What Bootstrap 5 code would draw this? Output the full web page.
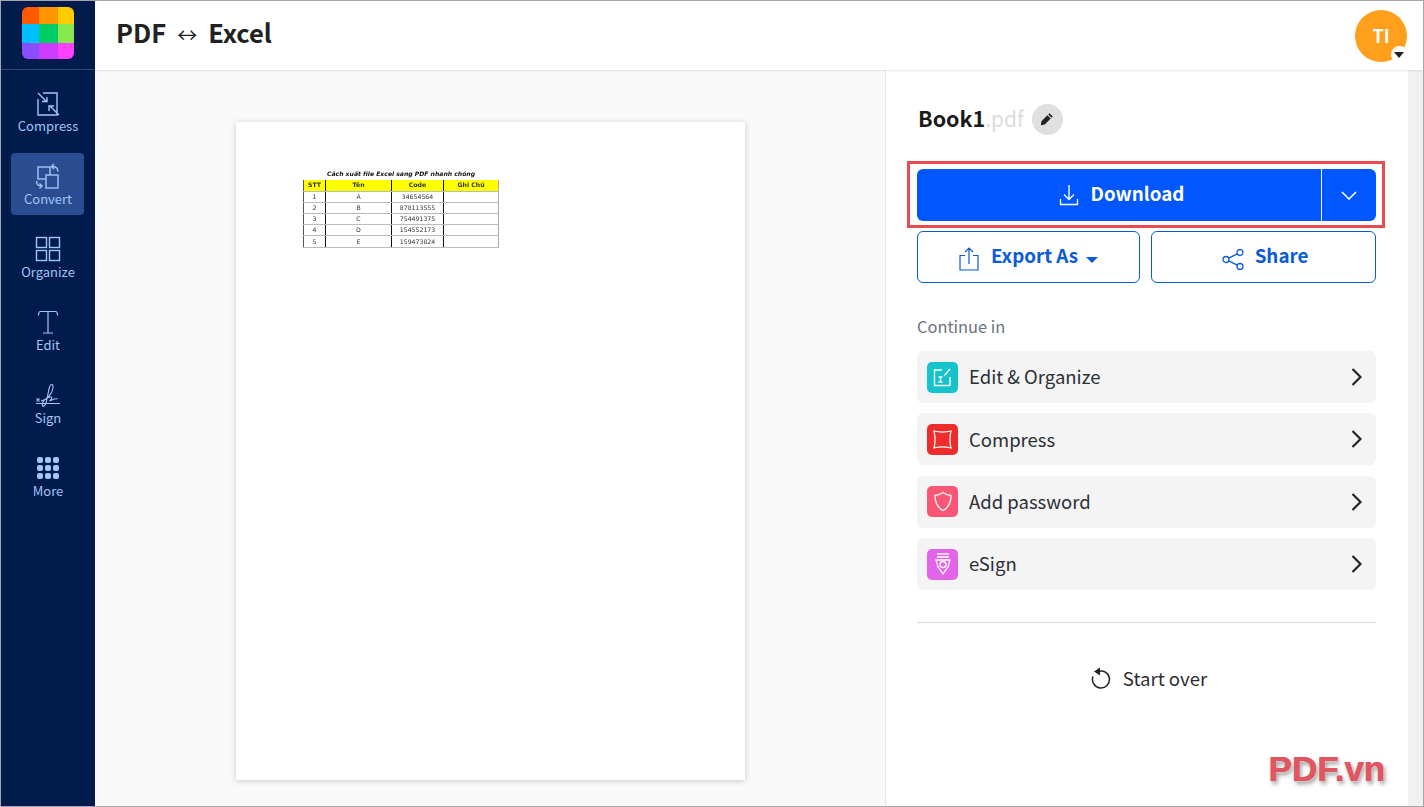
<!doctype html>
<html lang="en"><head><meta charset="utf-8"><title>PDF Excel</title>
<link href="https://cdn.jsdelivr.net/npm/bootstrap@5.3.0/dist/css/bootstrap.min.css" rel="stylesheet">
<style>
html,body{height:100%;overflow:hidden}
body{font-family:"Noto Sans CJK SC","Noto Sans",sans-serif;color:#212529;background:#fff}
.frame{width:1424px;height:807px;border:1px solid #a6a6a6;position:relative;overflow:hidden}
.side{width:94px;background:#011b4d;flex:none}
.logo-cell{height:69px;border-bottom:1px solid #33497a;padding-top:6px}
.logo-grid{width:52px;height:52px;border-radius:6px;overflow:hidden;display:grid;grid-template-columns:17px 19px 16px;grid-template-rows:17px 19px 16px}
.tools{padding:10px 0 0 10px;gap:11px}
.tool{width:73px;height:62px;color:#a3c5f7;font-size:13px;line-height:16px;border-radius:4px;padding:10px 0 0 1px;text-align:center}
.tool svg{display:block;margin:0 auto 2px;width:26px;height:26px;fill:none;stroke:#a3c5f7;stroke-width:1.4}
.tool.on{background:#2a4d92}
.head{height:69px;padding-left:21px;box-shadow:0 1px 2px rgba(0,0,0,.1);position:relative;z-index:2;background:#fff}
.head-title{font-size:25.5px;font-weight:700;line-height:1;color:#212121;padding-bottom:8px}
.head-arrow{font-size:20px;font-weight:400;margin:0 11px}
.avatar{width:52px;height:52px;border-radius:50%;background:#ff9f1c;color:#fff;font-weight:700;font-size:18px;position:relative;margin-right:16px}
.avatar-cue{position:absolute;right:-1px;bottom:-1px;width:17px;height:17px;border-radius:50%;background:#fff}
.avatar-cue:after{content:"";position:absolute;left:3px;top:6px;border:5px solid transparent;border-top:6px solid #212121;border-bottom:0}
.stage{background:#f9f9f9;min-width:0}
.sheet{width:509px;height:658px;margin:52px 0 0 141px;background:#fff;box-shadow:0 1px 6px rgba(0,0,0,.2);padding:46px 0 0 67px}
.mini{width:195px;border-collapse:collapse;table-layout:fixed;font-family:"DejaVu Sans",sans-serif;font-size:6.2px;line-height:10px;color:#333;text-align:center;filter:blur(.4px)}
.mini td,.mini th{border-bottom:1px solid #bbb;border-right:1px solid #111;height:11.2px;padding:0;font-weight:400}
.mini td:last-child,.mini th:last-child{border-right:1px solid #aaa}
.mini td:first-child,.mini th:first-child{border-left:1px solid #555}
.mini caption{caption-side:top;padding:0;color:#111;text-align:center;font-style:italic;font-weight:700;font-size:6.1px;line-height:12px;border-bottom:0}
.mini thead th{background:#ff0;font-weight:700;color:#333}
.panel{width:523px;flex:none;border-left:1px solid #e6e6e6;background:#fff;padding:33px 32px 0 31px;position:relative}
.rail{width:15px;flex:none;background:#f1f1f1}
.fname{height:32px;font-size:21.5px;font-weight:700;line-height:30px;color:#1a1a1a;padding-left:1px}
.fname span{color:#dcdcdc;font-weight:400;font-size:21px}
.pen{width:31px;height:31px;border-radius:50%;background:#e0e0e0;margin-left:8px}
.dl-wrap{position:relative;margin-top:34px}
.red-box{position:absolute;left:-10px;right:-9px;top:-8px;bottom:-7px;border:3px solid #e84c4f;pointer-events:none}
.dl-main,.dl-more{height:52px;background:#0057ff;border:0;color:#fff;font-size:18.8px;font-weight:700;border-radius:6px}
.dl-main{flex:1;border-radius:6px 0 0 6px;border-right:1px solid #fff;padding:0 0 4px 5px}
.dl-more{width:54px;border-radius:0 6px 6px 0}
.dl-main:hover,.dl-more:hover{background:#0057ff;color:#fff}
.dl-main svg{margin-top:3px}
.out-btn{height:52px;border:1px solid #0a5bd8;color:#0a5bd8;background:#fff;font-size:18.8px;font-weight:700;border-radius:6px;line-height:1;padding-bottom:9px}
.out-btn svg{margin-top:7px}
.out-caret{border:6px solid transparent;border-top:6px solid #0a5bd8;border-bottom:0;margin-top:8px}
.export{width:223px}.share{width:225px;padding-left:15px}
.share svg{margin-right:11px!important}
.cont-label{font-size:16.4px;line-height:24px;color:#6b7280;margin-top:31px}
.cont-row{height:52px;background:#f4f4f4;border-radius:6px;padding:0 14px 0 10px;font-size:18.5px;color:#2b2f36;margin-top:10.4px}
.cont-first{margin-top:13px}
.cont-ico{width:31px;height:31px;border-radius:5px;margin-right:11px;flex:none}
.sep{border-top:1px solid #d9d9d9;margin-top:31.5px}
.again{font-size:18.6px;color:#2b2f36;margin-top:41px;line-height:28px;padding-left:5px}
.again svg{margin-right:12px}
.stamp{position:absolute;right:38px;bottom:19px;font-family:"Liberation Sans",sans-serif;font-weight:700;font-size:35px;line-height:36px;color:#e05661;text-shadow:.5px 0 0 #e05661,1px 1px 0 #c9c9c9,2px 3px 4px rgba(0,0,0,.4)}
</style></head>
<body>
<div class="frame d-flex">
 <nav class="side">
  <div class="logo-cell"><div class="logo-grid mx-auto">
   <i style="background:#ff5a00"></i><i style="background:#ff9500"></i><i style="background:#ffcc00"></i>
   <i style="background:#00bfff"></i><i style="background:#00cc66"></i><i style="background:#88e84f"></i>
   <i style="background:#8a4dff"></i><i style="background:#cc3dff"></i><i style="background:#ff40ff"></i>
  </div></div>
  <div class="tools d-flex flex-column">
   <div class="tool"><svg viewBox="0 0 26 26"><path d="M8 3h14v22H3V9M3 3l9 9M7 11.500h5V7M24 25l-9-9M14 21v-5h5"/></svg>Compress</div>
   <div class="tool on"><svg viewBox="0 0 26 26"><rect x="3" y="4" width="12" height="12"/><rect x="11" y="12" width="12" height="13" fill="#2a4d92"/><path d="M19 1l-2.500 2.500 2.500 2.500M17 3.500c4 0 6 1 6 5M1.500 18c0 3 1 5 5 5M4.500 20.500l2.500 2.500-2.500 2.500"/></svg>Convert</div>
   <div class="tool"><svg viewBox="0 0 26 26"><rect x="1.500" y="1.500" width="10" height="10"/><rect x="14.500" y="1.500" width="10" height="10"/><rect x="1.500" y="14.500" width="10" height="10"/><rect x="14.500" y="14.500" width="10" height="10"/></svg>Organize</div>
   <div class="tool"><svg viewBox="0 0 26 26" style="stroke-width:1.200"><path d="M3.500 6.500c0-3 .5-4 2-4h15c1.500 0 2 1 2 4M13 2.500v21.500M8 24h10"/></svg>Edit</div>
   <div class="tool"><svg viewBox="0 0 26 26" style="stroke-width:1.100"><path d="M1 21.500h24M1.500 16.500l3 3M4.500 16.500l-3 3M6 19c6-1 11-7 12-13 .5-4-2-5-3.500-1-1.500 5-2 12-4 17-1.500 3.500-3.500 3-3-.5.500-3 4-5.500 7.500-6.500 3-.5 2 2-.5 4 3-1 6-3 8-2"/></svg>Sign</div>
   <div class="tool"><svg viewBox="0 0 26 26" style="stroke:none;fill:#a3c5f7"><rect x="2" y="2" width="6" height="6" rx="2"/><rect x="10" y="2" width="6" height="6" rx="2"/><rect x="18" y="2" width="6" height="6" rx="2"/><rect x="2" y="10" width="6" height="6" rx="2"/><rect x="10" y="10" width="6" height="6" rx="2"/><rect x="18" y="10" width="6" height="6" rx="2"/><rect x="2" y="18" width="6" height="6" rx="2"/><rect x="10" y="18" width="6" height="6" rx="2"/><rect x="18" y="18" width="6" height="6" rx="2"/></svg>More</div>
  </div>
 </nav>
 <div class="flex-grow-1 d-flex flex-column" style="min-width:0">
  <header class="head d-flex align-items-center justify-content-between">
   <div class="head-title">PDF<span class="head-arrow">↔</span>Excel</div>
   <div class="avatar d-flex align-items-center justify-content-center">TI<span class="avatar-cue"></span></div>
  </header>
  <div class="d-flex flex-grow-1" style="min-height:0">
   <main class="stage flex-grow-1">
    <div class="sheet">
     <table class="mini">
      <caption>Cách xuất file Excel sang PDF nhanh chóng</caption>
      <colgroup><col style="width:22px"><col style="width:66px"><col style="width:52px"><col style="width:55px"></colgroup>
      <thead><tr><th>STT</th><th>Tên</th><th>Code</th><th>Ghi Chú</th></tr></thead>
      <tbody>
       <tr><td>1</td><td>A</td><td>34654564</td><td></td></tr>
       <tr><td>2</td><td>B</td><td>878113555</td><td></td></tr>
       <tr><td>3</td><td>C</td><td>754491375</td><td></td></tr>
       <tr><td>4</td><td>D</td><td>154552173</td><td></td></tr>
       <tr><td>5</td><td>E</td><td>159473824</td><td></td></tr>
      </tbody>
     </table>
    </div>
   </main>
   <aside class="panel">
    <div class="d-flex align-items-center">
     <div class="fname">Book1<span>.pdf</span></div>
     <div class="pen d-flex align-items-center justify-content-center"><svg width="14" height="14" viewBox="0 0 14 14"><path fill="#222" d="M9.500 1.200l3.300 3.300-1.300 1.300-3.300-3.300zM7.400 3.300l3.300 3.300-5.900 5.900-4 .7.700-4z"/></svg></div>
    </div>
    <div class="dl-wrap">
     <div class="d-flex">
      <button class="btn dl-main d-flex align-items-center justify-content-center"><svg class="me-2" width="20" height="22" viewBox="0 0 20 22" fill="none" stroke="#fff" stroke-width="1.300"><path d="M10 1v14M5 10.500l5 5 5-5M1.500 15v5.500h17V15"/></svg><span class="ms-1">Download</span></button>
      <button class="btn dl-more d-flex align-items-center justify-content-center" aria-label="More"><svg width="16" height="9" viewBox="0 0 16 9" fill="none" stroke="#fff" stroke-width="1.500"><path d="M1 1l7 7 7-7"/></svg></button>
     </div>
     <span class="red-box"></span>
    </div>
    <div class="d-flex justify-content-between" style="margin-top:10px">
     <button class="btn out-btn export d-flex align-items-center justify-content-center"><svg class="me-2" width="20" height="24" viewBox="0 0 20 24" fill="none" stroke="#0a5bd8" stroke-width="1.200"><path d="M6 8.500H1v14.500h18V8.500h-5M10 17V1M6 5l4-4 4 4"/></svg><span class="ms-1">Export As</span><span class="ms-2 out-caret"></span></button>
     <button class="btn out-btn share d-flex align-items-center justify-content-center"><svg class="me-2" width="22" height="21" viewBox="0 0 22 21" fill="none" stroke="#0a5bd8" stroke-width="1.300"><circle cx="4" cy="10.500" r="3"/><circle cx="18" cy="3.500" r="3"/><circle cx="18" cy="17.500" r="3"/><path d="M6.700 9.200l8.600-4.400M6.700 11.800l8.600 4.400"/></svg>Share</button>
    </div>
    <div class="cont-label">Continue in</div>
    <div class="cont-row cont-first d-flex align-items-center justify-content-between"><div class="d-flex align-items-center"><span class="cont-ico d-flex align-items-center justify-content-center" style="background:#14c3cb"><svg width="21" height="21" viewBox="0 0 21 21" fill="none" stroke="#fff" stroke-width="1.400"><path d="M10 3H2.500v15.500H18V10M12 9l6-7M6.500 10h4M8.500 10v5M6.500 15h4"/></svg></span>Edit &amp; Organize</div><svg width="11" height="18" viewBox="0 0 11 18" fill="none" stroke="#222" stroke-width="2.200"><path d="M1.500 1l8 8-8 8"/></svg></div>
    <div class="cont-row d-flex align-items-center justify-content-between"><div class="d-flex align-items-center"><span class="cont-ico d-flex align-items-center justify-content-center" style="background:#ee2c2c"><svg width="21" height="21" viewBox="0 0 21 21" fill="none" stroke="#fff" stroke-width="1.200"><path d="M2 2c6 1.500 11 1.500 17 0-1.500 6-1.500 11 0 17-6-1.500-11-1.500-17 0 1.500-6 1.500-11 0-17z"/></svg></span>Compress</div><svg width="11" height="18" viewBox="0 0 11 18" fill="none" stroke="#222" stroke-width="2.200"><path d="M1.500 1l8 8-8 8"/></svg></div>
    <div class="cont-row d-flex align-items-center justify-content-between"><div class="d-flex align-items-center"><span class="cont-ico d-flex align-items-center justify-content-center" style="background:#fb5676"><svg width="20" height="21" viewBox="0 0 20 21" fill="none" stroke="#fff" stroke-width="1.300"><path d="M10 1.500c2.500 1.800 5 2.800 8 3 0 7-2 12-8 15-6-3-8-8-8-15 3-.2 5.500-1.200 8-3z"/></svg></span>Add password</div><svg width="11" height="18" viewBox="0 0 11 18" fill="none" stroke="#222" stroke-width="2.200"><path d="M1.500 1l8 8-8 8"/></svg></div>
    <div class="cont-row d-flex align-items-center justify-content-between"><div class="d-flex align-items-center"><span class="cont-ico d-flex align-items-center justify-content-center" style="background:#e264e8"><svg width="18" height="24" viewBox="0 0 18 24" fill="none" stroke="#fff" stroke-width="1.300"><path d="M3 2h12M3 5h12M2 8h14l-2 7-5 7-5-7z"/><circle cx="9" cy="12.500" r="3"/></svg></span>eSign</div><svg width="11" height="18" viewBox="0 0 11 18" fill="none" stroke="#222" stroke-width="2.200"><path d="M1.500 1l8 8-8 8"/></svg></div>
    <div class="sep"></div>
    <div class="again d-flex align-items-center justify-content-center"><svg width="20" height="22" viewBox="0 0 20 22" fill="none" stroke="#222" stroke-width="1.500"><path d="M7 4.500a8.500 8.500 0 1 1-5 5"/><path d="M9 .5v8L3 4.500z" fill="#222" stroke="none"/></svg>Start over</div>
   </aside>
   <div class="rail"></div>
  </div>
 </div>
 <div class="stamp">PDF.vn</div>
</div>
</body></html>
